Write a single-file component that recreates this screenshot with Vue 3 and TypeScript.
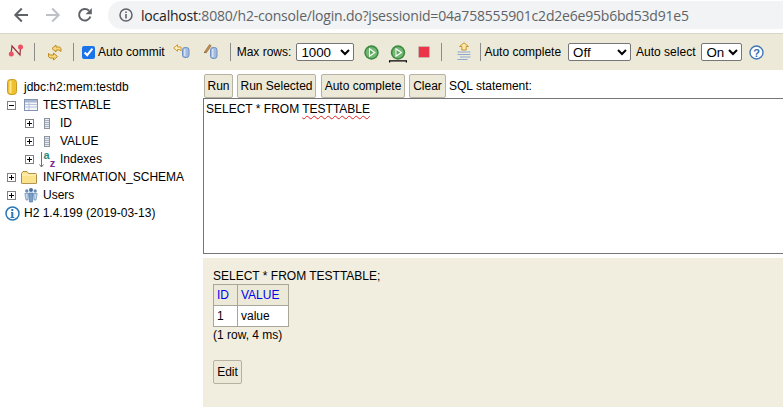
<script setup lang="ts">
interface TreeRow { id: string; depth: number; toggle: string; icon: string; text: string }
const rows: TreeRow[] = [
  { id: 'db', depth: 0, toggle: '', icon: 'db', text: 'jdbc:h2:mem:testdb' },
  { id: 'tt', depth: 0, toggle: 'minus', icon: 'table', text: 'TESTTABLE' },
  { id: 'c1', depth: 1, toggle: 'plus', icon: 'col', text: 'ID' },
  { id: 'c2', depth: 1, toggle: 'plus', icon: 'col', text: 'VALUE' },
  { id: 'ix', depth: 1, toggle: 'plus', icon: 'index', text: 'Indexes' },
  { id: 'is', depth: 0, toggle: 'plus', icon: 'folder', text: 'INFORMATION_SCHEMA' },
  { id: 'us', depth: 0, toggle: 'plus', icon: 'users', text: 'Users' },
  { id: 'h2', depth: 0, toggle: '', icon: 'info', text: 'H2 1.4.199 (2019-03-13)' }
]
</script>

<template>
  <div class="page">
    <header class="chrome">
      <svg class="nav" width="16" height="16" viewBox="0 0 16 16"><path d="M15 8H2.500M8.800 1.500 2.300 8l6.500 6.500" fill="none" stroke="#5f6368" stroke-width="2"/></svg>
      <svg class="nav fwd" width="16" height="16" viewBox="0 0 16 16"><path d="M1 8h12.500M7.200 1.500 13.700 8l-6.500 6.500" fill="none" stroke="#bdc1c6" stroke-width="2"/></svg>
      <svg class="nav rel" width="16" height="16" viewBox="0 0 16 16"><path d="M13.400 9.500A5.800 5.800 0 1 1 12 3.700" fill="none" stroke="#5f6368" stroke-width="2"/><path d="M14.800 1v6.200H8.600z" fill="#5f6368"/></svg>
      <div class="omni">
        <svg width="14" height="14" viewBox="0 0 14 14"><circle cx="7" cy="7" r="6" fill="none" stroke="#5f6368" stroke-width="1.500"/><path d="M6.200 6h1.600v4.400H6.200zM6.200 3.400h1.600V5H6.200z" fill="#5f6368"/></svg>
        <span class="url"><span class="host">localhost</span>:8080/h2-console/login.do?jsessionid=04a758555901c2d2e6e95b6bd53d91e5</span>
      </div>
    </header>

    <div class="toolbar">
      <svg class="i1" width="17" height="16" viewBox="0 0 17 16"><path d="M3 10 4 2l8 9 .5-8" fill="none" stroke="#a03040" stroke-width="1.200"/><circle cx="3.300" cy="10" r="2.500" fill="#ee5064"/><circle cx="12.500" cy="3" r="2.500" fill="#ee5064"/></svg>
      <i class="sep s1"></i>
      <svg class="i2" width="16" height="17" viewBox="0 0 16 17"><path d="M9 1 5 4.500 9 8V6h3l2 1.500V4.300L12.400 3H9z" fill="#f7d680" stroke="#c08a1c"/><path d="M6.500 16l4-3.500-4-3.500v2h-3L1.500 9.500v3.200L3.100 14h3.400z" fill="#f7d680" stroke="#c08a1c"/></svg>
      <i class="sep s2"></i>
      <input class="check" type="checkbox" checked>
      <span class="lbl l1">Auto commit</span>
      <svg class="i3" width="17" height="14" viewBox="0 0 17 14"><path d="M4.500.7.700 4l3.800 3.300V5.500h2.300L8 7V3H4.500z" fill="#fdf0c4" stroke="#cc9a30"/><rect x="9.500" y="3.500" width="6.500" height="10" rx="2.400" fill="#a2bbde" stroke="#6f90c4"/><rect x="11" y="5" width="1.500" height="7" fill="#d6e2f2"/></svg>
      <svg class="i4" width="14" height="15" viewBox="0 0 14 15"><path d="M.5 8 5.500.6l1.700 1.100L2.200 9z" fill="#c58a4a" stroke="#8a6a3a" stroke-width=".6"/><path d="M.5 8l-.2 1.200 1.200-.6z" fill="#222"/><rect x="6.500" y="3.500" width="6.500" height="11" rx="2.400" fill="#a2bbde" stroke="#6f90c4"/><rect x="8" y="5" width="1.500" height="8" fill="#d6e2f2"/></svg>
      <i class="sep s3"></i>
      <span class="lbl l2">Max rows:</span>
      <select class="sel s-rows"><option>1000</option></select>
      <svg class="i5" width="15" height="15" viewBox="0 0 15 15"><circle cx="7.500" cy="7.500" r="7.200" fill="#3a8a40"/><circle cx="7.500" cy="7.500" r="5.600" fill="#74b874"/><path d="M5 2.800 11.800 7.500 5 12.200z" fill="#fff"/><path d="M6 5l3.800 2.500L6 10z" fill="#5aa85a"/></svg>
      <svg class="i6" width="18" height="18" viewBox="0 0 18 18"><circle cx="9" cy="7.500" r="7.200" fill="#3a8a40"/><circle cx="9" cy="7.500" r="5.600" fill="#74b874"/><path d="M6.500 2.800 13.300 7.500 6.500 12.200z" fill="#fff"/><path d="M7.500 5l3.800 2.500L7.500 10z" fill="#5aa85a"/><path d="M.6 17.500v-1.600h16.800v1.600" fill="none" stroke="#000" stroke-width="1.200"/></svg>
      <svg class="i7" width="12" height="12" viewBox="0 0 12 12"><rect x=".5" y=".5" width="11" height="11" rx="1" fill="#ec3548" stroke="#cdb0a8"/></svg>
      <i class="sep s4"></i>
      <svg class="i8" width="14" height="18" viewBox="0 0 14 18"><path d="M7 .8 11.500 4.500H9.200V8H4.800V4.500H2.500z" fill="#fbe7a8" stroke="#c9952b"/><path d="M.5 10h13M.5 12.500h13M3 15h10.500M.5 17.500h10" stroke="#8fa8d0"/></svg>
      <i class="sep s5"></i>
      <span class="lbl l3">Auto complete</span>
      <select class="sel s-ac"><option>Off</option></select>
      <span class="lbl l4">Auto select</span>
      <select class="sel s-as"><option>On</option></select>
      <svg class="i9" width="15" height="15" viewBox="0 0 15 15"><circle cx="7.500" cy="7.500" r="6.500" fill="#fff" stroke="#3f78b5" stroke-width="1.400"/><text x="7.500" y="11.500" text-anchor="middle" class="qm">?</text></svg>
    </div>

    <main class="main">
      <aside class="tree">
        <div v-for="r in rows" :key="r.id" class="row" :class="{ nested: r.depth === 1, plain: !r.toggle }">
          <span v-if="r.toggle" class="toggle"><i class="hbar"></i><i v-if="r.toggle === 'plus'" class="vbar"></i></span>
          <span class="slot">
            <svg v-if="r.icon === 'db'" class="ic-db" width="10" height="16" viewBox="0 0 10 16"><rect x=".5" y=".5" width="9" height="15" rx="3" fill="#f0c030" stroke="#c89a20"/><rect x="2.500" y="2" width="2" height="12" fill="#fbe88a"/></svg>
            <svg v-else-if="r.icon === 'table'" class="ic-table" width="14" height="12" viewBox="0 0 14 12"><rect x=".5" y=".5" width="13" height="11" fill="#f4f6fa" stroke="#8494b0"/><rect x="1" y="1" width="12" height="2.500" fill="#a9b8d2"/><path d="M1 5.500h12M1 8h12M5 3.500V11" stroke="#a9b8d2" stroke-width=".8"/></svg>
            <svg v-else-if="r.icon === 'col'" class="ic-col" width="6" height="11" viewBox="0 0 6 11"><rect x=".5" y=".5" width="5" height="10" fill="#e8ecf2" stroke="#8b94a0"/><path d="M1 2.500h4M1 4.500h4M1 6.500h4M1 8.500h4" stroke="#a8b0bc"/></svg>
            <svg v-else-if="r.icon === 'index'" class="ic-index" width="18" height="22" viewBox="0 0 18 22">
              <path d="M2.500 4v15M.5 16.500l2 2.500 2-2.500" fill="none" stroke="#707070"/>
              <text x="4.500" y="11" class="ia">a</text><text x="10.700" y="19" class="iz">z</text>
            </svg>
            <svg v-else-if="r.icon === 'folder'" class="ic-folder" width="16" height="13" viewBox="0 0 16 13"><path d="M.5 2.500 2 .5h4l1.500 2h7a1 1 0 0 1 1 1V12a.6.6 0 0 1-.6.6H1.100a.6.6 0 0 1-.6-.6z" fill="#fbe38e" stroke="#a8904a"/><path d="M1 4h14" stroke="#fff4c0"/></svg>
            <svg v-else-if="r.icon === 'users'" class="ic-users" width="14" height="16" viewBox="0 0 14 16"><circle cx="2.800" cy="4" r="1.700" fill="#6a8cb8"/><circle cx="11.200" cy="4" r="1.700" fill="#6a8cb8"/><circle cx="7" cy="3" r="2" fill="#4a6f9c"/><path d="M.8 6.500h3.500L4 13H2zM9.700 6.500h3.500L12 13h-2z" fill="#c4d6ea" stroke="#5a7ca8" stroke-width=".6"/><path d="M4.800 6h4.400L8.500 15h-3z" fill="#7aa0cc" stroke="#3f6a9a" stroke-width=".6"/></svg>
            <svg v-else class="ic-info" width="15" height="15" viewBox="0 0 15 15"><circle cx="7.500" cy="7.500" r="6.500" fill="#fff" stroke="#2a78b8" stroke-width="1.500"/><path d="M6 6h2.300v5h1v1H5.500v-1h.8V7H6zM6.300 3h2v2h-2z" fill="#2a78b8"/></svg>
          </span>
          <span class="txt">{{ r.text }}</span>
        </div>
      </aside>

      <section class="work">
        <div class="actions">
          <button class="btn b-run">Run</button>
          <button class="btn b-sel">Run Selected</button>
          <button class="btn b-auto">Auto complete</button>
          <button class="btn b-clear">Clear</button>
          <span class="stmt">SQL statement:</span>
        </div>
        <div class="editor">SELECT * FROM <span class="squiggle">TESTTABLE</span></div>
        <div class="result">
          <div class="sql">SELECT * FROM TESTTABLE;</div>
          <table class="grid">
            <thead><tr><th class="c-id">ID</th><th class="c-val">VALUE</th></tr></thead>
            <tbody><tr><td>1</td><td>value</td></tr></tbody>
          </table>
          <div class="count">(1 row, 4 ms)</div>
          <button class="btn edit">Edit</button>
        </div>
      </section>
    </main>
  </div>
</template>

<style>
html, body { margin: 0; background: #fff; overflow: hidden; }
</style>

<style scoped>
.page { width: 783px; height: 407px; overflow: hidden; display: flex; flex-direction: column; font-family: "Liberation Sans", Arial, sans-serif; font-size: 12px; color: #000; }

.chrome { height: 30px; padding-bottom: 3px; flex: none; display: flex; align-items: center; background: #fff; border-bottom: 1px solid #d9d6c8; }
.nav { flex: none; margin-left: 13px; }
.fwd { margin-left: 16px; }
.rel { margin-left: 16px; }
.omni { margin-left: 15px; flex: 1; height: 28px; border-radius: 14px 0 0 14px; background: #f1f3f4; display: flex; align-items: center; padding-left: 11px; }
.url { margin-left: 8px; font-family: "Open Sans", sans-serif; font-size: 14px; letter-spacing: -0.2px; color: #5f6368; white-space: nowrap; }
.host { color: #202124; }

.toolbar { height: 36px; flex: none; background: #ece9d8; display: flex; align-items: center; }
.toolbar > * { flex: none; }
.sep { width: 1px; height: 18px; background: #8c8c8c; }
.i1 { margin-left: 8px; }
.s1 { margin-left: 9px; }
.i2 { margin-left: 12px; }
.s2 { margin-left: 10px; }
.check { margin: 0 0 0 8px; width: 13px; height: 13px; accent-color: #1a73e8; }
.lbl { line-height: 14px; white-space: nowrap; }
.l1 { margin-left: 3px; }
.i3 { margin-left: 8px; margin-top: -2px; }
.i4 { margin-left: 14px; margin-top: -1px; }
.s3 { margin-left: 12px; }
.l2 { margin-left: 6px; }
.sel { font-family: "Liberation Sans", Arial, sans-serif; font-size: 13.333px; height: 18px; margin: 0; padding: 0; background: #fff; border: 1px solid #767676; border-radius: 2px; color: #000; box-sizing: border-box; }
.s-rows { width: 58px; margin-left: 5px; }
.i5 { margin-left: 10px; }
.i6 { margin-left: 10px; margin-top: 4px; }
.i7 { margin-left: 11px; margin-top: -1px; }
.s4 { margin-left: 11px; }
.i8 { margin-left: 15px; margin-top: -2px; }
.s5 { margin-left: 9px; }
.l3 { margin-left: 3px; }
.s-ac { width: 63px; margin-left: 7px; }
.l4 { margin-left: 5px; }
.s-as { width: 41px; margin-left: 6px; }
.i9 { margin-left: 7px; }
.qm { font: bold 11px "Liberation Sans", sans-serif; fill: #2f6fb0; }

.main { flex: 1; min-height: 0; display: flex; }
.tree { width: 203px; flex: none; padding-top: 8px; box-sizing: border-box; background: #fff; }
.row { height: 18px; display: flex; align-items: center; padding-left: 7px; white-space: nowrap; }
.row.nested { padding-left: 25px; }
.row.plain { padding-left: 5px; }
.toggle { width: 7px; height: 7px; border: 1px solid #808080; background: #fff; position: relative; flex: none; }
.hbar { position: absolute; left: 1px; right: 1px; top: 3px; height: 1px; background: #000; }
.vbar { position: absolute; top: 1px; bottom: 1px; left: 3px; width: 1px; background: #000; }
.slot { width: 23px; margin-left: 4px; flex: none; display: flex; align-items: center; height: 18px; }
.nested .slot { width: 22px; }
.plain .slot { width: 19px; margin-left: 0; }
.ic-db { margin-left: 2px; }
.ic-table { margin-left: 4px; }
.ic-col { margin-left: 6px; }
.ic-index { margin-left: 1px; }
.ic-folder { margin-left: 1px; }
.ic-users { margin-left: 4px; }
.ia { font: bold 11px "Liberation Sans", sans-serif; fill: #2a8a7a; }
.iz { font: bold 11px "Liberation Sans", sans-serif; fill: #7a2a90; }

.work { flex: 1; min-width: 0; display: flex; flex-direction: column; }
.actions { height: 28px; flex: none; display: flex; align-items: flex-end; padding-left: 1px; box-sizing: border-box; }
.btn { font-family: "Liberation Sans", Arial, sans-serif; font-size: 12px; height: 24px; padding: 0; background: #ece9d8; border: 1px solid #b5b2a2; border-radius: 2px; color: #000; box-sizing: border-box; margin: 0; white-space: nowrap; }
.b-run { width: 29px; }
.b-sel { width: 79px; margin-left: 4px; }
.b-auto { width: 84px; margin-left: 5px; }
.b-clear { width: 37px; margin-left: 4px; }
.stmt { line-height: 24px; margin-left: 3px; }
.editor { height: 156px; flex: none; box-sizing: border-box; border: 1px solid #767676; border-right: 0; background: #fff; padding: 3px 2px; line-height: 15px; }
.squiggle { text-decoration: underline wavy #e02020 1px; text-underline-offset: 2px; }
.result { flex: 1; margin-top: 4px; background: #f1eee0; padding: 11px 10px; box-sizing: border-box; }
.sql { line-height: 14px; }
.grid { border-collapse: collapse; margin-top: 1px; table-layout: fixed; width: 75px; }
.grid th, .grid td { border: 1px solid #a7a698; height: 21px; padding: 0 3px; font-weight: normal; text-align: left; box-sizing: border-box; }
.c-id { width: 24px; }
.c-val { width: 51px; }
.grid th { background: #ece9d8; color: #0000ee; }
.grid td { background: #fff; }
.count { line-height: 14px; margin-top: 1px; }
.edit { display: block; margin-top: 18px; width: 29px; }
</style>
